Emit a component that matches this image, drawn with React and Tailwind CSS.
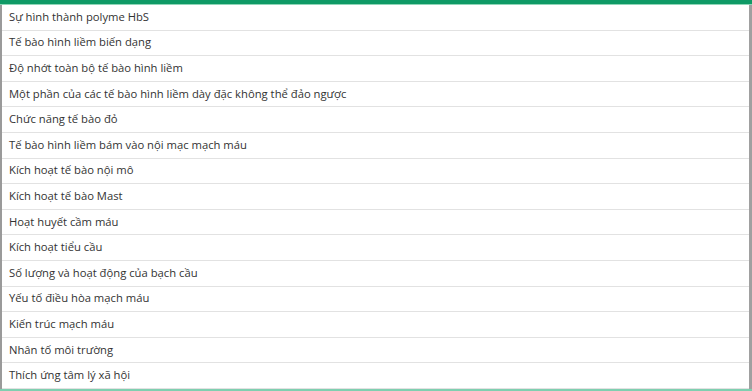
const rows = [
  'Sự hình thành polyme HbS',
  'Tế bào hình liềm biến dạng',
  'Độ nhớt toàn bộ tế bào hình liềm',
  'Một phần của các tế bào hình liềm dày đặc không thể đảo ngược',
  'Chức năng tế bào đỏ',
  'Tế bào hình liềm bám vào nội mạc mạch máu',
  'Kích hoạt tế bào nội mô',
  'Kích hoạt tế bào Mast',
  'Hoạt huyết cầm máu',
  'Kích hoạt tiểu cầu',
  'Số lượng và hoạt động của bạch cầu',
  'Yếu tố điều hòa mạch máu',
  'Kiến trúc mạch máu',
  'Nhân tố môi trường',
  'Thích ứng tâm lý xã hội',
];

export default function App() {
  return (
    <div className="h-[391px] w-[752px] overflow-hidden bg-white font-['Open_Sans',sans-serif]">
      <div className="h-[4px] bg-[#0f9a66]" />
      <div className="h-[1px] bg-[#8fd6b8]" />
      <div className="border-l-2 border-r-[3px] border-l-[#9a9a9a] border-r-[#a0a0a0]">
        {rows.map((row) => (
          <div
            key={row}
            className="flex h-[25.6px] items-center border-b-[1.5px] border-[#e2e2e2] pl-[7px] text-[11.25px] text-[#333]"
          >
            {row}
          </div>
        ))}
      </div>
      <div className="h-[3px] bg-[#7fcfb0]" />
    </div>
  );
}
